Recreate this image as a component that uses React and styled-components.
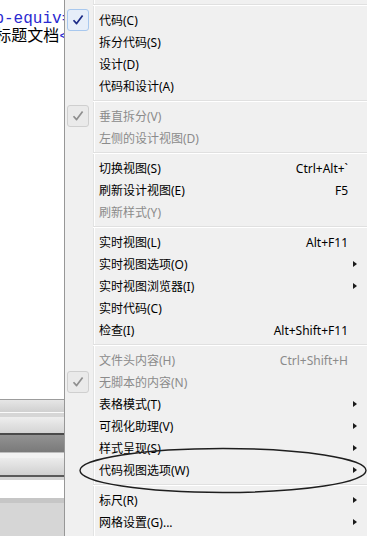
import React from "react";
import styled, { createGlobalStyle } from "styled-components";

const GlobalStyle = createGlobalStyle`
  html, body {
    margin: 0;
    padding: 0;
    background: #fff;
  }
  body {
    width: 367px;
    height: 536px;
    overflow: hidden;
  }
`;

const MENU = [
  { type: "sep", top: true },
  { label: "代码(C)", checked: true },
  { label: "拆分代码(S)" },
  { label: "设计(D)" },
  { label: "代码和设计(A)" },
  { type: "sep" },
  { label: "垂直拆分(V)", checked: true, disabled: true },
  { label: "左侧的设计视图(D)", disabled: true },
  { type: "sep" },
  { label: "切换视图(S)", shortcut: "Ctrl+Alt+`" },
  { label: "刷新设计视图(E)", shortcut: "F5" },
  { label: "刷新样式(Y)", disabled: true },
  { type: "sep" },
  { label: "实时视图(L)", shortcut: "Alt+F11" },
  { label: "实时视图选项(O)", sub: true },
  { label: "实时视图浏览器(I)", sub: true },
  { label: "实时代码(C)" },
  { label: "检查(I)", shortcut: "Alt+Shift+F11" },
  { type: "sep" },
  { label: "文件头内容(H)", shortcut: "Ctrl+Shift+H", disabled: true },
  { label: "无脚本的内容(N)", checked: true, disabled: true },
  { label: "表格模式(T)", sub: true },
  { label: "可视化助理(V)", sub: true },
  { label: "样式呈现(S)", sub: true },
  { label: "代码视图选项(W)", sub: true },
  { type: "sep" },
  { label: "标尺(R)", sub: true },
  { label: "网格设置(G)...", sub: true },
];

// panel header strips under the code view, top to bottom
const BARS = [
  { h: 1, bg: "#9c9c9c" },
  { h: 12, bg: "linear-gradient(#e6e6e6, #d0d0d0)" },
  { h: 1, bg: "#fafafa" },
  { h: 4, bg: "#d6d6d6" },
  { h: 16, bg: "linear-gradient(#eeeeee, #d4d4d4)" },
  { h: 2, bg: "#4a4a4a" },
  { h: 17, bg: "linear-gradient(#929292, #7a7a7a)" },
  { h: 1, bg: "#bdbdbd" },
  { h: 5, bg: "#f2f2f2" },
  { h: 17, bg: "linear-gradient(#ececec, #d0d0d0)" },
  { h: 2, bg: "#5a5a5a" },
  { h: 3, bg: "#d4d4d4" },
  { h: 18, bg: "#ffffff" },
  { h: 5, bg: "#c6c6c6" },
  { h: 33, bg: "#d6d6d6" },
];

const Page = styled.div`
  position: relative;
  display: flex;
  width: 367px;
  height: 536px;
  overflow: hidden;
`;

const LeftPane = styled.div`
  display: flex;
  flex-direction: column;
  width: 64px;
  flex-shrink: 0;
  overflow: hidden;
`;

const Code = styled.div`
  flex: 1;
  padding-top: 10px;
  margin-left: -92px;
  font-family: "Liberation Mono", "Noto Sans CJK SC", monospace;
  font-size: 16px;
  line-height: 18px;
  white-space: pre;
  color: #000;
`;

const CodeLine = styled.div`
  padding-left: ${(p) => p.$indent || 0}px;
`;

const Tag = styled.span`
  color: #2a2ad0;
`;

const Bar = styled.div`
  height: ${(p) => p.h}px;
  flex-shrink: 0;
  background: ${(p) => p.bg};
`;

const Menu = styled.div`
  flex: 1;
  border-left: 1px solid #979797;
  background: linear-gradient(
    to right,
    #f0f0f0 28px,
    #e2e3e3 28px,
    #e2e3e3 29px,
    #ffffff 29px,
    #ffffff 30px,
    #f0f0f0 30px
  );
  font-family: "Noto Sans", "Noto Sans CJK SC", sans-serif;
  font-size: 12px;
`;

const Separator = styled.div`
  height: ${(p) => (p.$top ? 9 : 8)}px;
  padding-top: ${(p) => (p.$top ? 4 : 3)}px;
  padding-left: 28px;
  box-sizing: border-box;

  &::before {
    content: "";
    display: block;
    height: 1px;
    background: #e0e0e0;
    border-bottom: 1px solid #ffffff;
  }
`;

const Item = styled.div`
  display: flex;
  align-items: center;
  height: 22px;
  color: ${(p) => (p.$disabled ? "#8b8b8b" : "#000")};
`;

const CheckCell = styled.div`
  width: 28px;
  height: 22px;
  flex-shrink: 0;
  display: flex;
  align-items: center;
`;

const CheckBox = styled.div`
  width: 20px;
  height: 20px;
  margin-left: 2px;
  border: 1px solid ${(p) => (p.$disabled ? "#cfcfcf" : "#a8c8ee")};
  border-radius: 3px;
  background: ${(p) => (p.$disabled ? "#eaeaea" : "#e6eef9")};
  display: flex;
  align-items: center;
  justify-content: center;
`;

const Label = styled.div`
  flex: 1;
  padding-left: 6px;
  white-space: nowrap;
`;

const Shortcut = styled.div`
  white-space: nowrap;
`;

const ArrowCell = styled.div`
  width: 19px;
  flex-shrink: 0;
  display: flex;
  align-items: center;
  padding-left: 5px;
  box-sizing: border-box;
`;

const Arrow = styled.div`
  width: 0;
  height: 0;
  border-left: 4px solid #1a1a1a;
  border-top: 3.5px solid transparent;
  border-bottom: 3.5px solid transparent;
`;

const Overlay = styled.svg`
  position: absolute;
  left: 0;
  top: 0;
  pointer-events: none;
`;

const Check = ({ disabled }) => (
  <svg width="12" height="12" viewBox="0 0 12 12">
    <path
      d="M1.5 6.2 L4.6 9.6 L10.6 1.6"
      fill="none"
      stroke={disabled ? "#8e8e8e" : "#1b2a86"}
      strokeWidth="1.7"
      strokeLinejoin="round"
    />
  </svg>
);

export default function App() {
  return (
    <>
      <GlobalStyle />
      <Page>
        <LeftPane>
          <Code>
            <CodeLine>
              <Tag>{'<meta http-equiv="Content-Type"'}</Tag>
            </CodeLine>
            <CodeLine $indent={4}>
              <Tag>{"<title>"}</Tag>
              无标题文档
              <Tag>{"</title>"}</Tag>
            </CodeLine>
          </Code>
          {BARS.map((b, i) => (
            <Bar key={i} h={b.h} bg={b.bg} />
          ))}
        </LeftPane>
        <Menu>
          {MENU.map((m, i) =>
            m.type === "sep" ? (
              <Separator key={i} $top={m.top} />
            ) : (
              <Item key={i} $disabled={m.disabled}>
                <CheckCell>
                  {m.checked && (
                    <CheckBox $disabled={m.disabled}>
                      <Check disabled={m.disabled} />
                    </CheckBox>
                  )}
                </CheckCell>
                <Label>{m.label}</Label>
                {m.shortcut && <Shortcut>{m.shortcut}</Shortcut>}
                <ArrowCell>{m.sub && <Arrow />}</ArrowCell>
              </Item>
            )
          )}
        </Menu>
        <Overlay width="367" height="536">
          <ellipse
            cx="223"
            cy="470.5"
            rx="143"
            ry="22"
            fill="none"
            stroke="#1e1e1e"
            strokeWidth="1.4"
          />
        </Overlay>
      </Page>
    </>
  );
}
